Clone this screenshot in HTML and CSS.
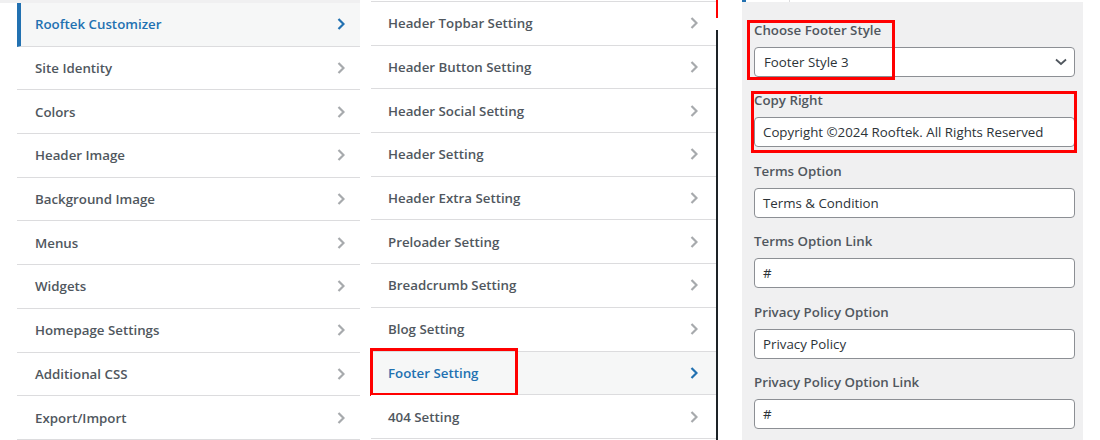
FILE: index.html
```html
<!DOCTYPE html>
<html lang="en">
<head>
<meta charset="utf-8">
<title>Customizer</title>
<link rel="stylesheet" href="styles.css">
</head>
<body>
<div class="page">
  <div class="pane pane-main">
    <ul class="menu">
      <li class="item active"><span class="label">Rooftek Customizer</span><svg class="chev" viewBox="0 0 8 12"><polyline points="1.5,1 6.5,6 1.5,11"/></svg></li>
      <li class="item"><span class="label">Site Identity</span><svg class="chev" viewBox="0 0 8 12"><polyline points="1.5,1 6.5,6 1.5,11"/></svg></li>
      <li class="item"><span class="label">Colors</span><svg class="chev" viewBox="0 0 8 12"><polyline points="1.5,1 6.5,6 1.5,11"/></svg></li>
      <li class="item"><span class="label">Header Image</span><svg class="chev" viewBox="0 0 8 12"><polyline points="1.5,1 6.5,6 1.5,11"/></svg></li>
      <li class="item"><span class="label">Background Image</span><svg class="chev" viewBox="0 0 8 12"><polyline points="1.5,1 6.5,6 1.5,11"/></svg></li>
      <li class="item"><span class="label">Menus</span><svg class="chev" viewBox="0 0 8 12"><polyline points="1.5,1 6.5,6 1.5,11"/></svg></li>
      <li class="item"><span class="label">Widgets</span><svg class="chev" viewBox="0 0 8 12"><polyline points="1.5,1 6.5,6 1.5,11"/></svg></li>
      <li class="item"><span class="label">Homepage Settings</span><svg class="chev" viewBox="0 0 8 12"><polyline points="1.5,1 6.5,6 1.5,11"/></svg></li>
      <li class="item"><span class="label">Additional CSS</span><svg class="chev" viewBox="0 0 8 12"><polyline points="1.5,1 6.5,6 1.5,11"/></svg></li>
      <li class="item"><span class="label">Export/Import</span><svg class="chev" viewBox="0 0 8 12"><polyline points="1.5,1 6.5,6 1.5,11"/></svg></li>
    </ul>
  </div>

  <div class="pane pane-sub">
    <ul class="menu">
      <li class="item"><span class="label">Header Topbar Setting</span><svg class="chev" viewBox="0 0 8 12"><polyline points="1.5,1 6.5,6 1.5,11"/></svg></li>
      <li class="item"><span class="label">Header Button Setting</span><svg class="chev" viewBox="0 0 8 12"><polyline points="1.5,1 6.5,6 1.5,11"/></svg></li>
      <li class="item"><span class="label">Header Social Setting</span><svg class="chev" viewBox="0 0 8 12"><polyline points="1.5,1 6.5,6 1.5,11"/></svg></li>
      <li class="item"><span class="label">Header Setting</span><svg class="chev" viewBox="0 0 8 12"><polyline points="1.5,1 6.5,6 1.5,11"/></svg></li>
      <li class="item"><span class="label">Header Extra Setting</span><svg class="chev" viewBox="0 0 8 12"><polyline points="1.5,1 6.5,6 1.5,11"/></svg></li>
      <li class="item"><span class="label">Preloader Setting</span><svg class="chev" viewBox="0 0 8 12"><polyline points="1.5,1 6.5,6 1.5,11"/></svg></li>
      <li class="item"><span class="label">Breadcrumb Setting</span><svg class="chev" viewBox="0 0 8 12"><polyline points="1.5,1 6.5,6 1.5,11"/></svg></li>
      <li class="item"><span class="label">Blog Setting</span><svg class="chev" viewBox="0 0 8 12"><polyline points="1.5,1 6.5,6 1.5,11"/></svg></li>
      <li class="item current"><span class="label">Footer Setting</span><svg class="chev" viewBox="0 0 8 12"><polyline points="1.5,1 6.5,6 1.5,11"/></svg><span class="mark mark-footer"></span></li>
      <li class="item"><span class="label">404 Setting</span><svg class="chev" viewBox="0 0 8 12"><polyline points="1.5,1 6.5,6 1.5,11"/></svg></li>
    </ul>
  </div>

  <div class="divider">
    <span class="divider-red"></span>
    <span class="divider-dark"></span>
  </div>

  <div class="pane pane-controls">
    <div class="tabs-edge"><span class="tab-blue"></span><span class="tab-line"></span></div>
    <div class="fields">
      <div class="field">
        <label class="field-label">Choose Footer Style</label>
        <div class="select">
          <span>Footer Style 3</span>
          <svg class="select-arrow" viewBox="0 0 12 8"><polyline points="1,1.5 6,6 11,1.5"/></svg>
        </div>
        <span class="mark mark-style"></span>
      </div>
      <div class="field">
        <label class="field-label">Copy Right</label>
        <div class="input">Copyright ©2024 Rooftek. All Rights Reserved</div>
        <span class="mark mark-copy"></span>
      </div>
      <div class="field">
        <label class="field-label">Terms Option</label>
        <div class="input">Terms &amp; Condition</div>
      </div>
      <div class="field">
        <label class="field-label">Terms Option Link</label>
        <div class="input">#</div>
      </div>
      <div class="field">
        <label class="field-label">Privacy Policy Option</label>
        <div class="input">Privacy Policy</div>
      </div>
      <div class="field">
        <label class="field-label">Privacy Policy Option Link</label>
        <div class="input">#</div>
      </div>
    </div>
  </div>
</div>
</body>
</html>
```

FILE: styles.css
```css
* { box-sizing: border-box; }

html, body {
  margin: 0;
  padding: 0;
  background: #ffffff;
}

body {
  font-family: "Open Sans", "Noto Sans", "Liberation Sans", sans-serif;
  font-size: 13.3px;
  color: #50575e;
  width: 1100px;
  height: 440px;
  overflow: hidden;
}

.page {
  display: flex;
  align-items: stretch;
  height: 440px;
}

.menu {
  list-style: none;
  margin: 0;
  padding: 0;
}

.item {
  position: relative;
  display: flex;
  align-items: center;
  justify-content: space-between;
  height: 43.7px;
  border-bottom: 1px solid #dcdcde;
  font-weight: 600;
  color: #50575e;
  background: #ffffff;
}

.chev {
  width: 8px;
  height: 12px;
  fill: none;
  stroke: #a7aaad;
  stroke-width: 2.2;
  flex: none;
}

/* first pane */
.pane-main {
  width: 360px;
  flex: none;
  padding-left: 17px;
  border-top: 3px solid #f0f0f1;
}
.pane-main .item {
  padding: 0 15px 0 18px;
}
.pane-main .item.active {
  background: #f6f7f7;
  color: #2271b1;
  border-left: 4px solid #2271b1;
  padding-left: 14px;
}
.item.active .chev,
.item.current .chev { stroke: #2271b1; }

/* second pane */
.pane-sub {
  width: 345px;
  flex: none;
  margin-left: 11px;
  padding-top: 1px;
}
.pane-sub .menu {
  border-top: 1px solid #dcdcde;
}
.pane-sub .item {
  padding: 0 18px 0 17px;
}
.pane-sub .item.current {
  background: #f6f7f7;
  color: #2271b1;
}

/* divider */
.divider {
  width: 2px;
  flex: none;
  display: flex;
  flex-direction: column;
}
.divider-red {
  height: 18px;
  background: #ff0000;
  flex: none;
}
.divider-dark {
  margin-top: 12px;
  flex: 1;
  background: #1d2327;
}

/* controls pane */
.pane-controls {
  width: 341px;
  flex: none;
  margin-left: 24px;
  background: #f0f0f1;
}
.tabs-edge {
  height: 2px;
  background: #ffffff;
  display: flex;
}
.tab-blue {
  width: 4px;
  background: #2271b1;
}
.tab-line {
  width: 1px;
  margin-left: 43px;
  background: #dcdcde;
}

.fields {
  display: flex;
  flex-direction: column;
  gap: 13.4px;
  padding: 18px 8px 0 12px;
}
.field {
  position: relative;
  display: flex;
  flex-direction: column;
}
.field-label {
  font-weight: 600;
  color: #50575e;
  line-height: 20px;
  margin-bottom: 7px;
}
.select,
.input {
  height: 30px;
  border: 1px solid #8c8f94;
  border-radius: 4px;
  background: #ffffff;
  color: #2c3338;
  font-weight: 400;
  display: flex;
  align-items: center;
  padding-left: 8px;
}
.select {
  justify-content: space-between;
  padding-left: 9px;
  padding-right: 7px;
}
.select-arrow {
  width: 12px;
  height: 8px;
  fill: none;
  stroke: #50575e;
  stroke-width: 1.8;
}

/* red annotation boxes */
.mark {
  position: absolute;
  border: 3px solid #ff0000;
  pointer-events: none;
}
.mark-style {
  left: -7px;
  top: 0;
  width: 148px;
  height: 60px;
}
.mark-copy {
  left: -3px;
  top: 1px;
  width: 326px;
  height: 62px;
}
.mark-footer {
  left: -1px;
  top: -4px;
  width: 148px;
  height: 48px;
}
```
